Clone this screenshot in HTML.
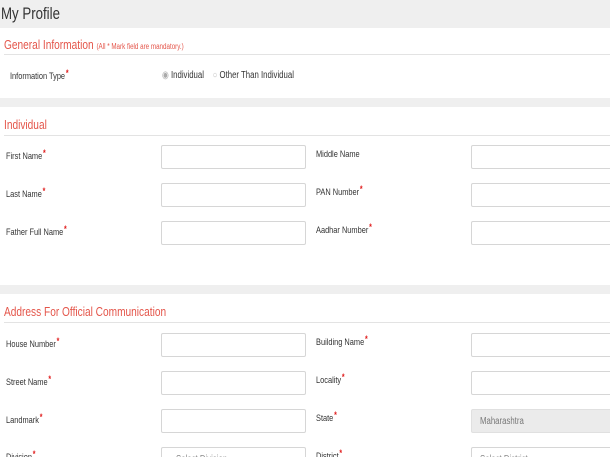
<!DOCTYPE html><html><head><style>
*{margin:0;padding:0;box-sizing:border-box}
html,body{width:610px;height:457px;overflow:hidden}
body{background:#efefef;font-family:"Liberation Sans",sans-serif;color:#333}
#w{position:relative;width:610px;height:457px;overflow:hidden}
.a{position:absolute}
.t{transform:scaleX(.78);transform-origin:left top;white-space:nowrap}
.p{position:absolute;left:0;width:610px;background:#fff}
.h{position:absolute;left:4px;color:#e4554a;font-size:13px}
.ln{position:absolute;left:4px;width:606px;height:1px;background:#e3e3e3}
.l{position:absolute;font-size:9.5px;color:#333}
.l b{color:#e01b1b;font-size:9px;position:relative;top:-3px;margin-left:1px}
.i{position:absolute;height:24px;border:1px solid #d6d6d6;background:#fff;border-radius:2px}
.i span{position:absolute;left:8px;top:6px;font-size:10px;color:#888;transform:scaleX(.78);transform-origin:left top;white-space:nowrap}
</style></head><body><div id="w">
<div class="a t" style="left:1px;top:4px;font-size:17px;color:#333">My Profile</div>
<div class="p" style="top:28px;height:70px"></div>
<div class="h t" style="top:37px">General Information <span style="font-size:8px">(All * Mark field are mandatory.)</span></div>
<div class="ln" style="top:54px"></div>
<div class="l t" style="left:10px;top:71px">Information Type<b>*</b></div>
<div class="l t" style="left:162px;top:70px;font-size:10px"><span style="color:#aaa">◉</span> Individual &nbsp;&nbsp; <span style="color:#bbb">○</span> Other Than Individual</div>
<div class="p" style="top:107px;height:178px"></div>
<div class="h t" style="top:117px">Individual</div>
<div class="ln" style="top:135px"></div>
<div class="l t" style="left:6px;top:151px">First Name<b>*</b></div>
<div class="i" style="left:161px;top:145px;width:145px"></div>
<div class="l t" style="left:316px;top:149px">Middle Name</div>
<div class="i" style="left:471px;top:145px;width:145px"></div>
<div class="l t" style="left:6px;top:189px">Last Name<b>*</b></div>
<div class="i" style="left:161px;top:183px;width:145px"></div>
<div class="l t" style="left:316px;top:187px">PAN Number<b>*</b></div>
<div class="i" style="left:471px;top:183px;width:145px"></div>
<div class="l t" style="left:6px;top:227px">Father Full Name<b>*</b></div>
<div class="i" style="left:161px;top:221px;width:145px"></div>
<div class="l t" style="left:316px;top:225px">Aadhar Number<b>*</b></div>
<div class="i" style="left:471px;top:221px;width:145px"></div>
<div class="p" style="top:294px;height:163px"></div>
<div class="h t" style="top:304px">Address For Official Communication</div>
<div class="ln" style="top:322px"></div>
<div class="l t" style="left:6px;top:339px">House Number<b>*</b></div>
<div class="i" style="left:161px;top:333px;width:145px"></div>
<div class="l t" style="left:316px;top:337px">Building Name<b>*</b></div>
<div class="i" style="left:471px;top:333px;width:145px"></div>
<div class="l t" style="left:6px;top:377px">Street Name<b>*</b></div>
<div class="i" style="left:161px;top:371px;width:145px"></div>
<div class="l t" style="left:316px;top:375px">Locality<b>*</b></div>
<div class="i" style="left:471px;top:371px;width:145px"></div>
<div class="l t" style="left:6px;top:415px">Landmark<b>*</b></div>
<div class="i" style="left:161px;top:409px;width:145px"></div>
<div class="l t" style="left:316px;top:413px">State<b>*</b></div>
<div class="i" style="left:471px;top:409px;width:145px;background:#ebebeb;border-color:#e0e0e0"><span style="color:#777">Maharashtra</span></div>
<div class="l t" style="left:6px;top:452px">Division<b>*</b></div>
<div class="i" style="left:161px;top:447px;width:145px"><span style="left:14px">Select Division</span></div>
<div class="l t" style="left:316px;top:451px">District<b>*</b></div>
<div class="i" style="left:471px;top:447px;width:145px"><span>Select District</span></div>
</div></body></html>
